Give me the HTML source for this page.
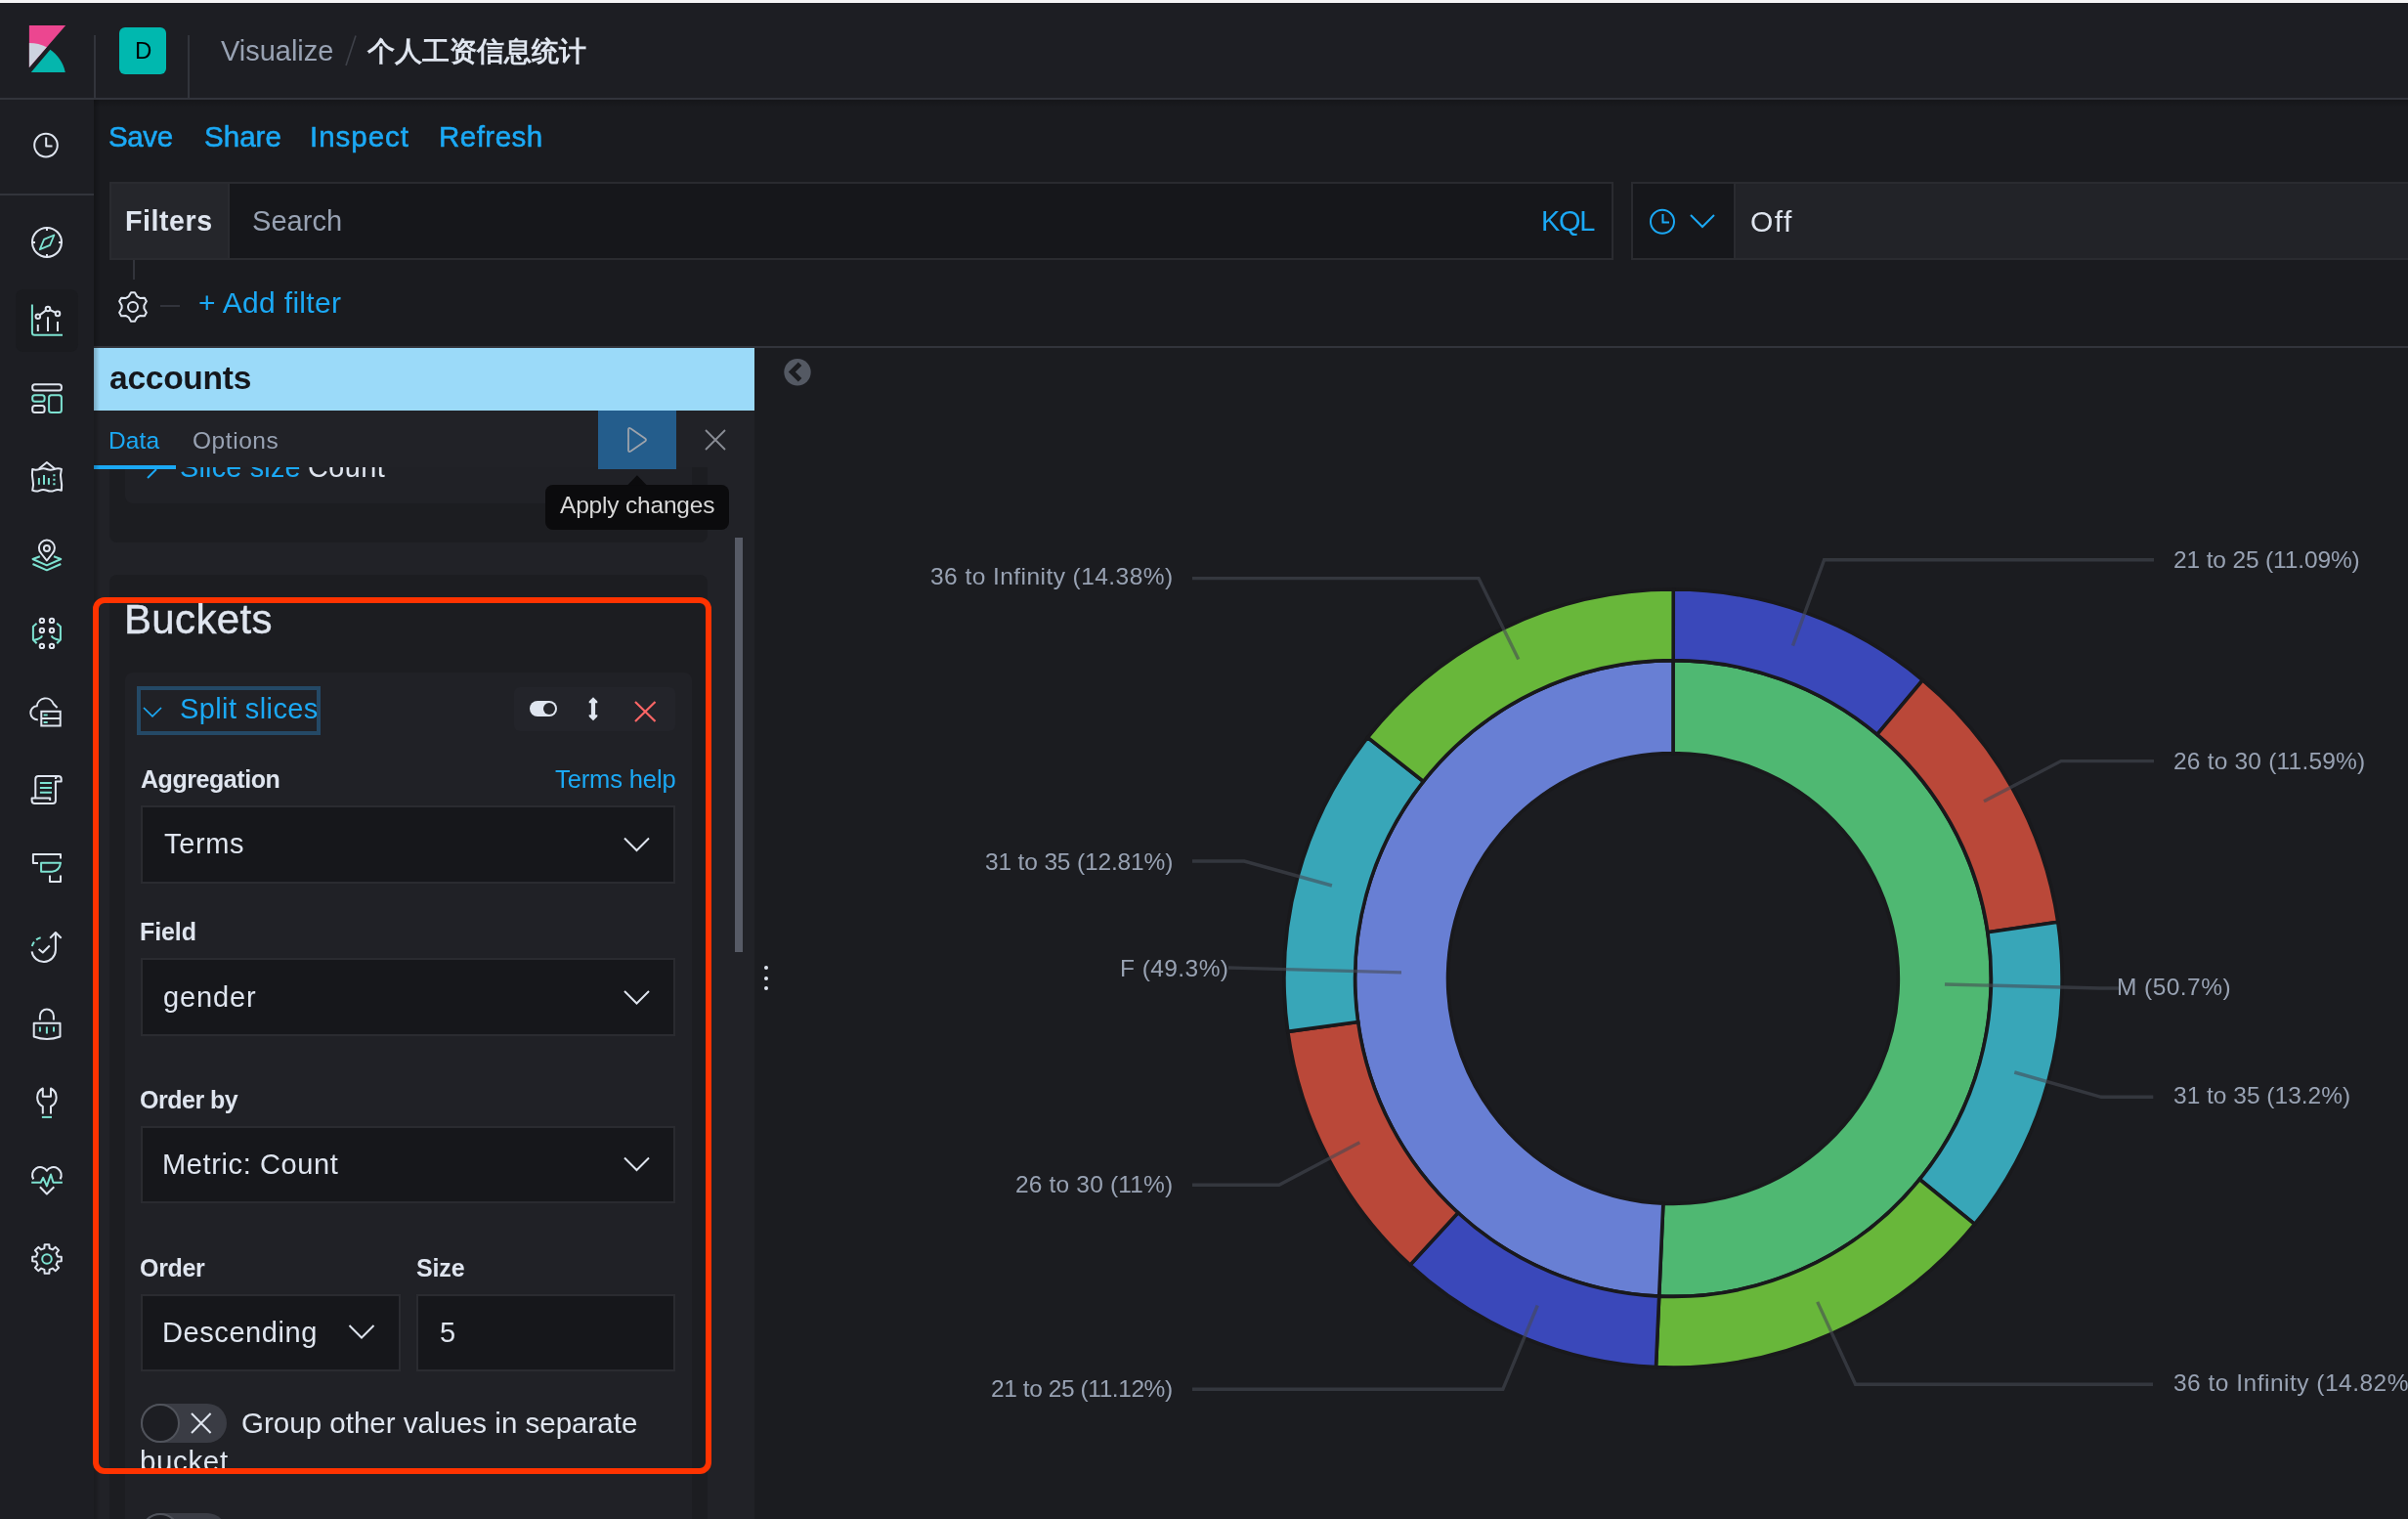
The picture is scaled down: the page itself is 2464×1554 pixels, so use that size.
<!DOCTYPE html><html><head><meta charset="utf-8"><style>
html,body{margin:0;padding:0;}
body{width:2464px;height:1554px;position:relative;overflow:hidden;background:#1A1B1F;font-family:"Liberation Sans", sans-serif;}
.t{position:absolute;white-space:pre;will-change:transform;}
.r{position:absolute;box-sizing:border-box;}
svg{position:absolute;overflow:visible;}
</style></head><body>
<div class="r" style="left:0px;top:0px;width:2464px;height:3px;background:#F4F4F5;"></div>
<div class="r" style="left:0px;top:3px;width:2464px;height:97px;background:#1D1E23;"></div>
<div class="r" style="left:0px;top:100px;width:2464px;height:2px;background:#32343B;"></div>
<svg style="left:0;top:0" width="100" height="100"><path d="M29.9,25.9 L67.2,25.9 L29.9,69 Z" fill="#EC4690"/><path d="M29.9,43.9 L29.9,69 L47.8,48.2 C42.5,45.4 36.5,43.9 29.9,43.9 Z" fill="#CDD3DF"/><path d="M31.8,73.9 L51.4,50.8 C58.5,55.5 64.5,63.5 66.8,73.9 Z" fill="#05B6AD"/></svg>
<div class="r" style="left:96px;top:36px;width:2px;height:64px;background:#32343B;"></div>
<div class="r" style="left:122px;top:28px;width:48px;height:48px;background:#00B8AF;border-radius:6px;"></div>
<div class="t" style="left:137.8px;top:39.6px;font-size:24px;line-height:24px;color:#000;font-weight:400;">D</div>
<div class="r" style="left:192px;top:36px;width:2px;height:64px;background:#32343B;"></div>
<div class="t" style="left:225.9px;top:37.5px;font-size:29px;line-height:29px;color:#98A2B3;font-weight:400;letter-spacing:-0.018px;">Visualize</div>
<svg style="left:0;top:0" width="400" height="100"><line x1="364" y1="36.5" x2="354" y2="67" stroke="#3E4149" stroke-width="1.6"/></svg>
<div class="t" style="left:376.0px;top:39.0px;font-size:27.7px;line-height:27.7px;color:#DFE5EF;font-weight:700;">个人工资信息统计</div>
<div class="r" style="left:0px;top:102px;width:96px;height:1452px;background:#1D1E23;"></div>
<div class="r" style="left:0px;top:198px;width:96px;height:2px;background:#32343B;"></div>
<div class="r" style="left:96px;top:102px;width:2368px;height:8px;background:linear-gradient(180deg,rgba(0,0,0,0.18),rgba(0,0,0,0));"></div>
<div class="t" style="left:111.3px;top:125.2px;font-size:29.5px;line-height:29.5px;color:#1BA9F5;font-weight:400;letter-spacing:-0.402px;-webkit-text-stroke:0.55px #1BA9F5;">Save</div>
<div class="t" style="left:208.5px;top:125.2px;font-size:29.5px;line-height:29.5px;color:#1BA9F5;font-weight:400;letter-spacing:0.03px;-webkit-text-stroke:0.55px #1BA9F5;">Share</div>
<div class="t" style="left:317.1px;top:125.2px;font-size:29.5px;line-height:29.5px;color:#1BA9F5;font-weight:400;letter-spacing:0.969px;-webkit-text-stroke:0.55px #1BA9F5;">Inspect</div>
<div class="t" style="left:448.6px;top:125.2px;font-size:29.5px;line-height:29.5px;color:#1BA9F5;font-weight:400;letter-spacing:0.476px;-webkit-text-stroke:0.55px #1BA9F5;">Refresh</div>
<div class="r" style="left:112px;top:186px;width:1539px;height:80px;background:#16171B;border:2px solid #2A2B30;"></div>
<div class="r" style="left:114px;top:188px;width:119px;height:76px;background:#25262B;"></div>
<div class="r" style="left:233px;top:188px;width:2px;height:76px;background:#2A2B30;"></div>
<div class="t" style="left:128.1px;top:212.0px;font-size:28.6px;line-height:28.6px;color:#DFE5EF;font-weight:700;letter-spacing:0.543px;">Filters</div>
<div class="t" style="left:257.7px;top:211.7px;font-size:29px;line-height:29px;color:#98A2B3;font-weight:400;letter-spacing:0.064px;">Search</div>
<div class="t" style="left:1576.6px;top:212.4px;font-size:29px;line-height:29px;color:#1BA9F5;font-weight:400;letter-spacing:-1.347px;">KQL</div>
<div class="r" style="left:1669px;top:186px;width:805px;height:80px;background:#222328;border:2px solid #2A2B30;"></div>
<div class="r" style="left:1671px;top:188px;width:104px;height:76px;background:#16171B;"></div>
<div class="r" style="left:1774px;top:188px;width:2px;height:76px;background:#2A2B30;"></div>
<svg style="left:0;top:0" width="1900" height="300"><circle cx="1701" cy="226.8" r="12" fill="none" stroke="#1BA9F5" stroke-width="2"/><path d="M1701.5,219 V227.5 H1708" fill="none" stroke="#1BA9F5" stroke-width="2"/><path d="M1730,220 L1742,232 L1754,220" fill="none" stroke="#1BA9F5" stroke-width="2"/></svg>
<div class="t" style="left:1790.6px;top:211.6px;font-size:30px;line-height:30px;color:#DFE5EF;font-weight:400;letter-spacing:1.45px;">Off</div>
<div class="r" style="left:136px;top:266px;width:2px;height:20px;background:#32343B;"></div>
<div class="r" style="left:164px;top:312px;width:20px;height:2px;background:#32343B;"></div>
<div class="t" style="left:202.5px;top:294.9px;font-size:30px;line-height:30px;color:#1BA9F5;font-weight:400;letter-spacing:0.305px;">+ Add filter</div>
<svg style="left:0;top:0" width="300" height="400"><path d="M134.04,299.13 L137.96,299.13 L140.40,303.38 L143.00,304.88 L147.90,304.87 L149.86,308.26 L147.40,312.50 L147.40,315.50 L149.86,319.74 L147.90,323.13 L143.00,323.12 L140.40,324.62 L137.96,328.87 L134.04,328.87 L131.60,324.62 L129.00,323.12 L124.10,323.13 L122.14,319.74 L124.60,315.50 L124.60,312.50 L122.14,308.26 L124.10,304.87 L129.00,304.88 L131.60,303.38 Z" fill="none" stroke="#DFE5EF" stroke-width="2" stroke-linejoin="round"/><circle cx="136" cy="314" r="5" fill="none" stroke="#DFE5EF" stroke-width="2"/></svg>
<div class="r" style="left:96px;top:354px;width:2368px;height:2px;background:#32343B;"></div>
<div class="r" style="left:96px;top:356px;width:676px;height:1198px;background:#212227;"></div>
<div class="r" style="left:96px;top:478px;width:676px;height:1076px;overflow:hidden;">
<div class="r" style="left:16px;top:-178px;width:612px;height:255px;background:#1C1D21;border-radius:8px;"></div>
<div class="r" style="left:32px;top:-178px;width:580px;height:215px;background:#202126;border-radius:8px;"></div>
<div class="t" style="left:87.7px;top:-13.9px;font-size:28.8px;line-height:28.8px;color:#1BA9F5;font-weight:400;letter-spacing:0.212px;">Slice size</div>
<div class="t" style="left:219.1px;top:-13.9px;font-size:28.8px;line-height:28.8px;color:#DFE5EF;font-weight:400;letter-spacing:0.476px;">Count</div>
<div class="r" style="left:16px;top:110px;width:612px;height:1100px;background:#1C1D21;border-radius:8px;"></div>
<div class="t" style="left:31.2px;top:134.6px;font-size:42px;line-height:42px;color:#DFE5EF;font-weight:400;-webkit-text-stroke:0.4px #DFE5EF;letter-spacing:0.344px;">Buckets</div>
<div class="r" style="left:32px;top:210px;width:580px;height:1000px;background:#202126;border-radius:8px;"></div>
<div class="r" style="left:44px;top:224px;width:188px;height:50px;background:transparent;border:4px solid #244966;"></div>
<div class="t" style="left:87.7px;top:233.3px;font-size:29px;line-height:29px;color:#1BA9F5;font-weight:400;letter-spacing:0.396px;">Split slices</div>
<div class="r" style="left:430px;top:225px;width:165px;height:45px;background:#23242A;border-radius:6px;"></div>
<div class="t" style="left:47.8px;top:307.4px;font-size:25px;line-height:25px;color:#DFE5EF;font-weight:700;letter-spacing:-0.445px;">Aggregation</div>
<div class="t" style="left:472.4px;top:307.0px;font-size:25.5px;line-height:25.5px;color:#1BA9F5;font-weight:400;letter-spacing:-0.121px;">Terms help</div>
<div class="r" style="left:48px;top:346px;width:547px;height:80px;background:#16171B;border:2px solid #2A2B30;"></div>
<div class="t" style="left:71.9px;top:370.9px;font-size:29px;line-height:29px;color:#DFE5EF;font-weight:400;letter-spacing:0.661px;">Terms</div>
<div class="r" style="left:48px;top:502px;width:547px;height:80px;background:#16171B;border:2px solid #2A2B30;"></div>
<div class="t" style="left:46.7px;top:463.3px;font-size:25px;line-height:25px;color:#DFE5EF;font-weight:700;letter-spacing:-0.106px;">Field</div>
<div class="t" style="left:71.3px;top:528.1px;font-size:29px;line-height:29px;color:#DFE5EF;font-weight:400;letter-spacing:0.875px;">gender</div>
<div class="r" style="left:48px;top:674px;width:547px;height:79px;background:#16171B;border:2px solid #2A2B30;"></div>
<div class="t" style="left:47.4px;top:635.2px;font-size:25px;line-height:25px;color:#DFE5EF;font-weight:700;letter-spacing:-0.493px;">Order by</div>
<div class="t" style="left:70.1px;top:699.3px;font-size:29px;line-height:29px;color:#DFE5EF;font-weight:400;letter-spacing:0.621px;">Metric: Count</div>
<div class="t" style="left:47.4px;top:807.3px;font-size:25px;line-height:25px;color:#DFE5EF;font-weight:700;letter-spacing:-0.319px;">Order</div>
<div class="t" style="left:329.6px;top:807.3px;font-size:25px;line-height:25px;color:#DFE5EF;font-weight:700;letter-spacing:-0.150px;">Size</div>
<div class="r" style="left:48px;top:846px;width:266px;height:79px;background:#16171B;border:2px solid #2A2B30;"></div>
<div class="r" style="left:330px;top:846px;width:265px;height:79px;background:#16171B;border:2px solid #2A2B30;"></div>
<div class="t" style="left:70.1px;top:870.8px;font-size:29px;line-height:29px;color:#DFE5EF;font-weight:400;letter-spacing:0.576px;">Descending</div>
<div class="t" style="left:354.1px;top:870.8px;font-size:29px;line-height:29px;color:#DFE5EF;font-weight:400;letter-spacing:0.000px;">5</div>
<div class="r" style="left:48px;top:958px;width:88px;height:40px;background:#3A3C44;border-radius:20px;"></div>
<div class="r" style="left:48px;top:958px;width:40px;height:40px;background:#1D1E23;border-radius:20px;border:2px solid #50535B;"></div>
<div class="t" style="left:150.9px;top:963.3px;font-size:29.5px;line-height:29.5px;color:#DFE5EF;font-weight:400;letter-spacing:0.012px;">Group other values in separate</div>
<div class="t" style="left:46.5px;top:1002.0px;font-size:29.5px;line-height:29.5px;color:#DFE5EF;font-weight:400;letter-spacing:0.637px;">bucket</div>
<div class="r" style="left:48px;top:1070px;width:88px;height:40px;background:#3A3C44;border-radius:20px;"></div>
<div class="r" style="left:48px;top:1070px;width:40px;height:40px;background:#1D1E23;border-radius:20px;border:2px solid #50535B;"></div>
</div>
<svg style="left:0;top:0" width="800" height="1554"><path d="M151,489 L160,480" stroke="#1BA9F5" stroke-width="2" fill="none"/><path d="M147,724 L156,732.8 L165,724" stroke="#1BA9F5" stroke-width="1.7" fill="none"/><path d="M639.0,857.5 L651.5,870 L664.0,857.5" stroke="#DFE5EF" stroke-width="2" fill="none"/><path d="M639.0,1014.0 L651.5,1026.5 L664.0,1014.0" stroke="#DFE5EF" stroke-width="2" fill="none"/><path d="M639.0,1184.5 L651.5,1197 L664.0,1184.5" stroke="#DFE5EF" stroke-width="2" fill="none"/><path d="M357.5,1356.0 L370,1368.5 L382.5,1356.0" stroke="#DFE5EF" stroke-width="2" fill="none"/><rect x="542" y="717" width="28" height="16" rx="8" fill="#DFE5EF"/><circle cx="562" cy="725" r="6" fill="#25262B"/><path d="M607,713.3 L611.3,717.6 V719.2 H609.1 V731.3 H611.3 V732.9 L607,737.2 L602.7,732.9 V731.3 H604.9 V719.2 H602.7 V717.6 Z" fill="#DFE5EF"/><path d="M650,718 L670.5,738 M670.5,718 L650,738" stroke="#FF6666" stroke-width="2.2" fill="none"/><path d="M196,1446 L215.6,1466 M215.6,1446 L196,1466" stroke="#DFE5EF" stroke-width="2" fill="none"/></svg>
<div class="r" style="left:96px;top:356px;width:676px;height:64px;background:#9BDAF9;"></div>
<div class="t" style="left:112.0px;top:369.8px;font-size:33.5px;line-height:33.5px;color:#15171C;font-weight:700;letter-spacing:-0.246px;">accounts</div>
<div class="r" style="left:96px;top:420px;width:676px;height:58px;background:#212227;"></div>
<div class="t" style="left:111.0px;top:439.1px;font-size:24.5px;line-height:24.5px;color:#1BA9F5;font-weight:400;letter-spacing:0.088px;">Data</div>
<div class="t" style="left:196.5px;top:439.1px;font-size:24.5px;line-height:24.5px;color:#98A2B3;font-weight:400;letter-spacing:0.551px;">Options</div>
<div class="r" style="left:96px;top:476px;width:84px;height:4px;background:#1BA9F5;"></div>
<div class="r" style="left:612px;top:420px;width:80px;height:60px;background:#245D8C;"></div>
<svg style="left:0;top:0" width="800" height="600"><path d="M643,439.5 L643,460.5 Q643,463 645.5,461.5 L660,451.5 Q662,450 660,448.5 L645.5,438.5 Q643,437 643,439.5 Z" fill="none" stroke="#9EA3AB" stroke-width="1.8"/><path d="M722,440 L742,460 M742,440 L722,460" stroke="#8A8D95" stroke-width="1.8"/></svg>
<div class="r" style="left:558px;top:496px;width:188px;height:46px;background:#0B0B0D;border-radius:8px;"></div>
<svg style="left:0;top:0" width="800" height="600"><path d="M641.9,496.5 L651.9,486.3 L661.9,496.5 Z" fill="#0B0B0D"/></svg>
<div class="t" style="left:572.9px;top:505.4px;font-size:24.5px;line-height:24.5px;color:#D8D8D8;font-weight:400;letter-spacing:-0.191px;">Apply changes</div>
<div class="r" style="left:752px;top:550px;width:8px;height:424px;background:#575B66;"></div>
<div class="r" style="left:96px;top:102px;width:6px;height:1452px;background:linear-gradient(90deg,rgba(0,0,0,0.22),rgba(0,0,0,0));"></div>
<div class="r" style="left:95px;top:611px;width:633px;height:897px;background:transparent;border:6px solid #FF3300;border-radius:12px;"></div>
<div class="r" style="left:772px;top:356px;width:1692px;height:1198px;background:#1B1C20;"></div>
<div class="r" style="left:782px;top:988px;width:4px;height:4px;border-radius:2px;background:#DFE5EF;"></div>
<div class="r" style="left:782px;top:998.5px;width:4px;height:4px;border-radius:2px;background:#DFE5EF;"></div>
<div class="r" style="left:782px;top:1009px;width:4px;height:4px;border-radius:2px;background:#DFE5EF;"></div>
<svg style="left:0;top:0" width="900" height="500"><circle cx="816" cy="380.7" r="13.7" fill="#545963"/><path d="M818.6,372.2 L810.3,380.5 L818.6,388.8" stroke="#1B1C20" stroke-width="5" fill="none" stroke-linecap="butt" stroke-linejoin="miter"/></svg>
<svg style="left:0;top:0" width="2464" height="1554"><path d="M1712.00,675.60 A325.4,325.4 0 1 1 1697.69,1326.09 L1701.87,1231.18 A230.4,230.4 0 1 0 1712.00,770.60 Z" fill="#4FB872" stroke="#19191C" stroke-width="3.6"/><path d="M1697.69,1326.09 A325.4,325.4 0 0 1 1712.00,675.60 L1712.00,770.60 A230.4,230.4 0 0 0 1701.87,1231.18 Z" fill="#687FD4" stroke="#19191C" stroke-width="3.6"/><path d="M1712.00,603.00 A398.0,398.0 0 0 1 1967.42,695.78 L1920.83,751.45 A325.4,325.4 0 0 0 1712.00,675.60 Z" fill="#3A48BA" stroke="#19191C" stroke-width="3.6"/><path d="M1967.42,695.78 A398.0,398.0 0 0 1 2105.78,943.19 L2033.95,953.73 A325.4,325.4 0 0 0 1920.83,751.45 Z" fill="#BA4839" stroke="#19191C" stroke-width="3.6"/><path d="M2105.78,943.19 A398.0,398.0 0 0 1 2020.57,1252.38 L1964.28,1206.52 A325.4,325.4 0 0 0 2033.95,953.73 Z" fill="#38A6B8" stroke="#19191C" stroke-width="3.6"/><path d="M2020.57,1252.38 A398.0,398.0 0 0 1 1694.50,1398.62 L1697.69,1326.09 A325.4,325.4 0 0 0 1964.28,1206.52 Z" fill="#68B73A" stroke="#19191C" stroke-width="3.6"/><path d="M1694.50,1398.62 A398.0,398.0 0 0 1 1442.85,1294.19 L1491.95,1240.71 A325.4,325.4 0 0 0 1697.69,1326.09 Z" fill="#3A48BA" stroke="#19191C" stroke-width="3.6"/><path d="M1442.85,1294.19 A398.0,398.0 0 0 1 1317.73,1055.35 L1389.65,1045.43 A325.4,325.4 0 0 0 1491.95,1240.71 Z" fill="#BA4839" stroke="#19191C" stroke-width="3.6"/><path d="M1317.73,1055.35 A398.0,398.0 0 0 1 1399.52,754.50 L1456.52,799.47 A325.4,325.4 0 0 0 1389.65,1045.43 Z" fill="#38A6B8" stroke="#19191C" stroke-width="3.6"/><path d="M1399.52,754.50 A398.0,398.0 0 0 1 1712.25,603.00 L1712.20,675.60 A325.4,325.4 0 0 0 1456.52,799.47 Z" fill="#68B73A" stroke="#19191C" stroke-width="3.6"/><path d="M1834.5,660.7 L1866.6,572.7 L2204,572.7" fill="none" stroke="rgba(70,73,84,0.6)" stroke-width="3.4"/><path d="M2030,819.8 L2109,778.6 L2204,778.6" fill="none" stroke="rgba(70,73,84,0.6)" stroke-width="3.4"/><path d="M1990,1007 L2148.5,1011 L2168,1011" fill="none" stroke="rgba(70,73,84,0.6)" stroke-width="3.4"/><path d="M2061.3,1097 L2150,1122.3 L2203.3,1122.3" fill="none" stroke="rgba(70,73,84,0.6)" stroke-width="3.4"/><path d="M1859.7,1331.9 L1898.6,1416.2 L2203,1416.2" fill="none" stroke="rgba(70,73,84,0.6)" stroke-width="3.4"/><path d="M1553.8,674.6 L1513,591.6 L1220,591.6" fill="none" stroke="rgba(70,73,84,0.6)" stroke-width="3.4"/><path d="M1362.9,906 L1273.2,881 L1220,881" fill="none" stroke="rgba(70,73,84,0.6)" stroke-width="3.4"/><path d="M1434,994.9 L1257,990" fill="none" stroke="rgba(70,73,84,0.6)" stroke-width="3.4"/><path d="M1391.3,1168.7 L1308.8,1212.2 L1220,1212.2" fill="none" stroke="rgba(70,73,84,0.6)" stroke-width="3.4"/><path d="M1573.3,1335.5 L1537.8,1421.3 L1220,1421.3" fill="none" stroke="rgba(70,73,84,0.6)" stroke-width="3.4"/></svg>
<div class="t" style="left:2224.3px;top:561.1px;font-size:24.5px;line-height:24.5px;color:#98A2B3;font-weight:400;letter-spacing:-0.139px;">21 to 25 (11.09%)</div>
<div class="t" style="left:2224.3px;top:767.0px;font-size:24.5px;line-height:24.5px;color:#98A2B3;font-weight:400;letter-spacing:0.205px;">26 to 30 (11.59%)</div>
<div class="t" style="left:2165.8px;top:998.3px;font-size:24.5px;line-height:24.5px;color:#98A2B3;font-weight:400;letter-spacing:0.442px;">M (50.7%)</div>
<div class="t" style="left:2224.4px;top:1109.0px;font-size:24.5px;line-height:24.5px;color:#98A2B3;font-weight:400;letter-spacing:-0.0px;">31 to 35 (13.2%)</div>
<div class="t" style="left:2224.4px;top:1403.3px;font-size:24.5px;line-height:24.5px;color:#98A2B3;font-weight:400;letter-spacing:0.492px;">36 to Infinity (14.82%)</div>
<div class="t" style="left:951.8px;top:578.0px;font-size:24.5px;line-height:24.5px;color:#98A2B3;font-weight:400;letter-spacing:0.446px;">36 to Infinity (14.38%)</div>
<div class="t" style="left:1007.6px;top:869.5px;font-size:24.5px;line-height:24.5px;color:#98A2B3;font-weight:400;letter-spacing:-0.152px;">31 to 35 (12.81%)</div>
<div class="t" style="left:1145.5px;top:978.5px;font-size:24.5px;line-height:24.5px;color:#98A2B3;font-weight:400;letter-spacing:0.434px;">F (49.3%)</div>
<div class="t" style="left:1038.8px;top:1199.8px;font-size:24.5px;line-height:24.5px;color:#98A2B3;font-weight:400;letter-spacing:0.174px;">26 to 30 (11%)</div>
<div class="t" style="left:1013.8px;top:1408.8px;font-size:24.5px;line-height:24.5px;color:#98A2B3;font-weight:400;letter-spacing:-0.426px;">21 to 25 (11.12%)</div>
<svg style="left:0;top:0" width="96" height="1554"><rect x="16" y="296" width="64" height="64" rx="8" fill="#1A1B1F"/><circle cx="47" cy="148.6" r="11.8" fill="none" stroke="#DFE5EF" stroke-width="2"/><path d="M47.2,140.5 V149.5 H53.5" fill="none" stroke="#DFE5EF" stroke-width="2" stroke-linejoin="round" /><circle cx="48" cy="247.9" r="15" fill="none" stroke="#DFE5EF" stroke-width="2"/><path d="M48,232.5 V236 M48,260 V263.5 M32.5,247.9 H36 M60,247.9 H63.5" fill="none" stroke="#DFE5EF" stroke-width="2" stroke-linejoin="round" /><path d="M40.8,255.2 L45.1,244.9 L55.4,240.5 L51.1,250.8 Z" fill="none" stroke="#7DE2D1" stroke-width="1.8" stroke-linejoin="round" /><path d="M32.9,311.5 V340.2 Q32.9,342.7 35.4,342.7 H64" fill="none" stroke="#7DE2D1" stroke-width="2" stroke-linejoin="round" /><path d="M38.8,332 V339 M49,324.2 V339 M59,329 V339" fill="none" stroke="#DFE5EF" stroke-width="2" stroke-linejoin="round" /><circle cx="38.8" cy="323.8" r="2.3" fill="none" stroke="#DFE5EF" stroke-width="2"/><circle cx="49" cy="316" r="2.3" fill="none" stroke="#DFE5EF" stroke-width="2"/><circle cx="59" cy="320.9" r="2.3" fill="none" stroke="#DFE5EF" stroke-width="2"/><path d="M40.6,322.4 L47.2,317.4 M51,317 L57,319.8" fill="none" stroke="#DFE5EF" stroke-width="2" stroke-linejoin="round" /><rect x="33.2" y="393.2" width="29.7" height="6.4" rx="2.5" fill="none" stroke="#DFE5EF" stroke-width="2"/><rect x="33.2" y="404.3" width="12.4" height="6.5" rx="2.5" fill="none" stroke="#7DE2D1" stroke-width="2"/><rect x="33.2" y="415" width="12.4" height="6.9" rx="2.5" fill="none" stroke="#DFE5EF" stroke-width="2"/><rect x="50.1" y="404.3" width="12.8" height="17.6" rx="2.5" fill="none" stroke="#7DE2D1" stroke-width="2"/><path d="M40,479.5 L47.9,473 L56,479.5" fill="none" stroke="#DFE5EF" stroke-width="2" stroke-linejoin="round" /><path d="M33.2,479.9 Q36.5,481.5 40.5,480 T48,480 T55.5,480 T62.9,479.9 Q61.3,485.5 62.5,491 T62.9,501.7 Q59,500.2 55.5,501.8 T48,501.8 T40.5,501.8 T33.2,501.7 Q34.8,496 33.6,491 T33.2,479.9 Z" fill="none" stroke="#DFE5EF" stroke-width="2" stroke-linejoin="round" /><path d="M39.9,489 V495.7 M45,486 V495.7 M49.9,489 V495.7" fill="none" stroke="#7DE2D1" stroke-width="2" stroke-linejoin="round" /><path d="M54.3,486.3 H56.5 M54.3,490.8 H56.5 M54.3,495.2 H56.5" fill="none" stroke="#7DE2D1" stroke-width="2" stroke-linejoin="round" /><path d="M47.9,573.5 L42,566 A8,8 0 1 1 53.8,566 Z" fill="none" stroke="#DFE5EF" stroke-width="2" stroke-linejoin="round" /><circle cx="47.9" cy="561" r="3" fill="none" stroke="#DFE5EF" stroke-width="2"/><path d="M40.9,569.3 L33.5,572 L47.9,578.3 L62.3,572 L55,569.3" fill="none" stroke="#7DE2D1" stroke-width="2" stroke-linejoin="round" /><path d="M33.5,577 L47.9,583.3 L62.3,577" fill="none" stroke="#7DE2D1" stroke-width="2" stroke-linejoin="round" /><circle cx="42.9" cy="634.9" r="2.2" fill="none" stroke="#DFE5EF" stroke-width="2"/><circle cx="42.9" cy="645" r="2.2" fill="none" stroke="#DFE5EF" stroke-width="2"/><circle cx="42.9" cy="660.9" r="2.2" fill="none" stroke="#DFE5EF" stroke-width="2"/><circle cx="53" cy="634.9" r="2.2" fill="none" stroke="#DFE5EF" stroke-width="2"/><circle cx="53" cy="645" r="2.2" fill="none" stroke="#DFE5EF" stroke-width="2"/><circle cx="53" cy="660.9" r="2.2" fill="none" stroke="#DFE5EF" stroke-width="2"/><path d="M37.6,637.8 L33.9,640.9 V654.5 L37.6,658.3" fill="none" stroke="#7DE2D1" stroke-width="2" stroke-linejoin="round" /><path d="M58.2,637.8 L61.9,640.9 V654.5 L58.2,658.3" fill="none" stroke="#7DE2D1" stroke-width="2" stroke-linejoin="round" /><path d="M43.1,650.4 Q42,653.5 35,654.8" fill="none" stroke="#7DE2D1" stroke-width="2" stroke-linejoin="round" /><path d="M52.7,650.4 Q53.8,653.5 60.8,654.8" fill="none" stroke="#7DE2D1" stroke-width="2" stroke-linejoin="round" /><path d="M38.8,736.3 A6.2,6.2 0 0 1 37.8,722.3 A8.7,8.7 0 0 1 54.6,720 Q56.6,722 58.6,724" fill="none" stroke="#DFE5EF" stroke-width="2" stroke-linejoin="round" /><rect x="42.3" y="727.8" width="19.4" height="14.7" fill="none" stroke="#DFE5EF" stroke-width="2"/><path d="M42.3,735 H61.7" fill="none" stroke="#DFE5EF" stroke-width="2" stroke-linejoin="round" /><path d="M44.6,731.4 H48.7 M44.6,739 H48.7" fill="none" stroke="#7DE2D1" stroke-width="2" stroke-linejoin="round" /><path d="M36.3,816.6 V797 Q36.3,794 39.3,794 H59.7 Q62.7,794 62.7,797 V799.5 H56.9 V818.9 Q56.9,821.9 53.9,821.9 H35.6 Q32.6,821.9 32.6,818.9 V816.6 H51.2 V818.9" fill="none" stroke="#DFE5EF" stroke-width="2" stroke-linejoin="round" /><path d="M56.9,797 Q56.9,794 59.7,794" fill="none" stroke="#DFE5EF" stroke-width="2" stroke-linejoin="round" /><path d="M40.9,800.9 H53 M40.9,805.9 H53 M40.9,810.8 H53" fill="none" stroke="#7DE2D1" stroke-width="2" stroke-linejoin="round" /><path d="M39,883 H33.9 V873.9 H62 V878.6" fill="none" stroke="#DFE5EF" stroke-width="2" stroke-linejoin="round" stroke-linejoin="miter"/><path d="M42.1,882.7 V891.8 H53.2 Q61,891 62,882.7 Z" fill="none" stroke="#7DE2D1" stroke-width="2" stroke-linejoin="round" /><path d="M51,895.5 V902 H62 V895.5" fill="none" stroke="#DFE5EF" stroke-width="2" stroke-linejoin="round" stroke-linejoin="miter"/><path d="M32.8,968 A12,12 0 0 1 44.6,958.9" fill="none" stroke="#7DE2D1" stroke-width="2" stroke-linejoin="round" stroke-dasharray="5,3"/><path d="M32.6,973.3 A12.2,12.2 0 0 0 56.9,972 V953.8" fill="none" stroke="#DFE5EF" stroke-width="2" stroke-linejoin="round" /><path d="M51.2,959.7 L56.9,954 L62.7,959.7" fill="none" stroke="#DFE5EF" stroke-width="2" stroke-linejoin="round" /><path d="M39.6,971 L43.8,974.5 L50.8,967.5" fill="none" stroke="#DFE5EF" stroke-width="2" stroke-linejoin="round" /><path d="M40.9,1043.5 V1039.5 A7,7 0 0 1 54.9,1039.5 V1043.5" fill="none" stroke="#DFE5EF" stroke-width="2" stroke-linejoin="round" /><path d="M34.7,1046.8 H61.5 V1060.5 Q48,1065.5 34.7,1060.5 Z" fill="none" stroke="#DFE5EF" stroke-width="2" stroke-linejoin="round" /><path d="M40.9,1050.5 V1055.6 M47.9,1050.5 V1057.5 M55,1050.5 V1055.6" fill="none" stroke="#7DE2D1" stroke-width="2" stroke-linejoin="round" /><path d="M43.8,1139.4 V1132 A10.4,10.4 0 0 1 43.8,1113.5 V1121.7 H52 V1113.5 A10.4,10.4 0 0 1 52,1132 V1139.4" fill="none" stroke="#DFE5EF" stroke-width="2" stroke-linejoin="round" /><path d="M42.9,1142.9 H53" fill="none" stroke="#7DE2D1" stroke-width="2" stroke-linejoin="round" /><path d="M34.3,1206.4 A7.3,7.3 0 0 1 47.9,1197.8 A7.3,7.3 0 0 1 61.5,1206.4" fill="none" stroke="#DFE5EF" stroke-width="2" stroke-linejoin="round" /><path d="M32.2,1209.7 H41.7 L44.2,1204.8 L47.9,1213.4 L52,1201.5 L54.5,1209.7 H63.9" fill="none" stroke="#7DE2D1" stroke-width="2" stroke-linejoin="round" /><path d="M40.9,1214.2 L47.9,1221.5 L55.3,1214.2" fill="none" stroke="#DFE5EF" stroke-width="2" stroke-linejoin="round" /><path d="M45.39,1277.11 L45.65,1273.18 L50.35,1273.18 L50.61,1277.11 L53.85,1278.45 L56.82,1275.86 L60.14,1279.18 L57.55,1282.15 L58.89,1285.39 L62.82,1285.65 L62.82,1290.35 L58.89,1290.61 L57.55,1293.85 L60.14,1296.82 L56.82,1300.14 L53.85,1297.55 L50.61,1298.89 L50.35,1302.82 L45.65,1302.82 L45.39,1298.89 L42.15,1297.55 L39.18,1300.14 L35.86,1296.82 L38.45,1293.85 L37.11,1290.61 L33.18,1290.35 L33.18,1285.65 L37.11,1285.39 L38.45,1282.15 L35.86,1279.18 L39.18,1275.86 L42.15,1278.45 Z" fill="none" stroke="#DFE5EF" stroke-width="2" stroke-linejoin="round" /><circle cx="48" cy="1288" r="4.8" fill="none" stroke="#7DE2D1" stroke-width="2"/></svg>
</body></html>
